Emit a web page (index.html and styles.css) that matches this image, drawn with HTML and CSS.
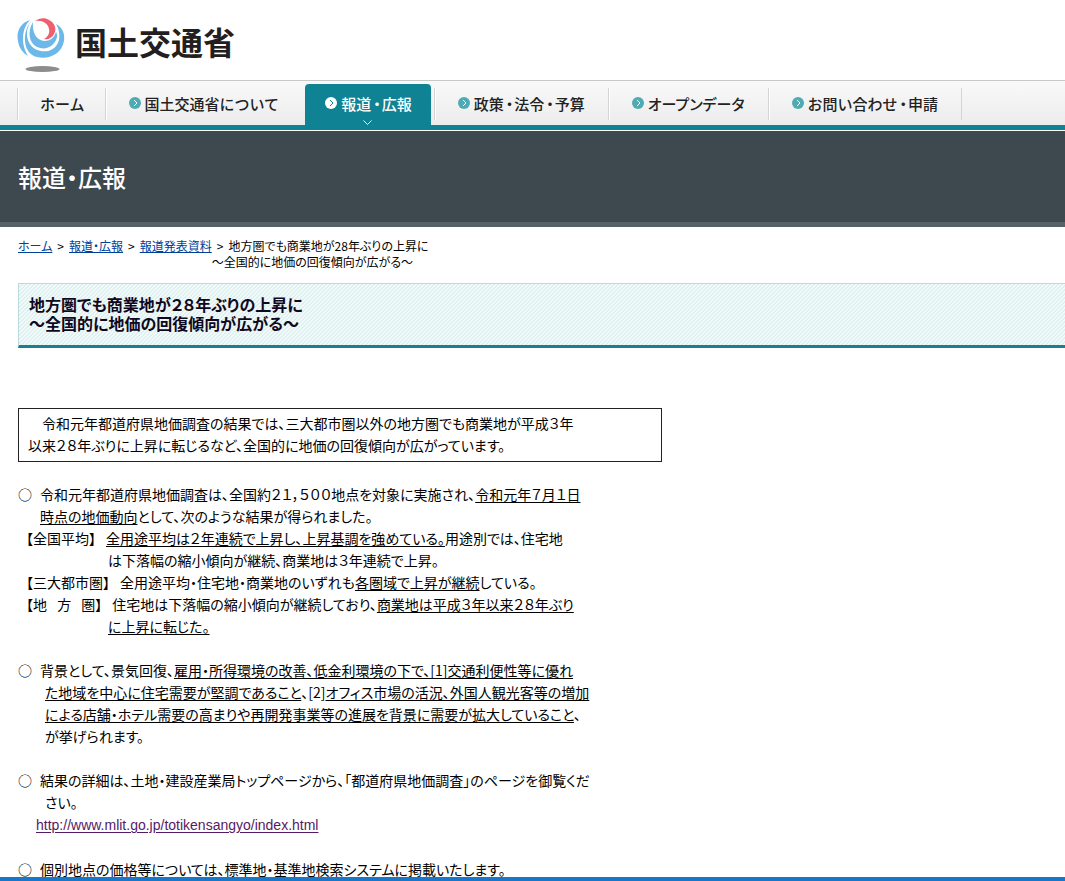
FILE: index.html
```
<!DOCTYPE html>
<html lang="ja">

  <head>

    <meta charset="UTF-8">

    <title>報道・広報 - 国土交通省</title>

    <link rel="stylesheet" href="styles.css">

  </head>

  <body>

    <div id="header">
      <a class="logo" href="#">
        <svg width="50" height="56" viewBox="0 0 50 56">
          <path fill="#6cb8e8" d="M13 2C3 5-1 14 1 23c1 7 5 12 10 15C4 28 4 11 13 2z"/>
          <path fill="#6cb8e8" d="M15 2C7 12 9 25 18 31c10 5 21 2 24-9 1-6 0-11-3-16 7 4 9 10 8 17-2 12-14 19-27 16C6 36 4 14 15 2z"/>
          <path fill="#6cb8e8" d="M16 4C10 14 12 25 20 29c9 4 18-1 20-10 0-2 0-4-1-5-2 6-6 9-12 9C19 22 15 14 16 4z"/>
          <path fill="#f05f6e" d="M18 3c4-3 10-4 14-1 6 3 8 9 5 14-2 4-6 6-10 5 4-2 6-6 5-10-1-6-7-9-14-8z"/>
          <ellipse cx="25.500" cy="51" rx="17" ry="3" fill="#8c8c8c"/>
        </svg>
        <span>国土交通省</span>
      </a>
    </div>

    <ul id="nav">
      <li class="home"><a href="#">ホーム</a></li>
      <li><a href="#"><svg class="arrow" viewBox="0 0 12 12"><circle cx="6" cy="6" r="6"/><path d="M5 3l3 3-3 3"/></svg>国土交通省について</a></li>
      <li class="active"><a href="#"><svg class="arrow" viewBox="0 0 12 12"><circle cx="6" cy="6" r="6"/><path d="M5 3l3 3-3 3"/></svg>報道<i>・</i>広報</a><svg class="down" viewBox="0 0 9 5"><path d="M.5.500l4 4 4-4"/></svg></li>
      <li><a href="#"><svg class="arrow" viewBox="0 0 12 12"><circle cx="6" cy="6" r="6"/><path d="M5 3l3 3-3 3"/></svg>政策<i>・</i>法令<i>・</i>予算</a></li>
      <li class="kana"><a href="#"><svg class="arrow" viewBox="0 0 12 12"><circle cx="6" cy="6" r="6"/><path d="M5 3l3 3-3 3"/></svg>オープンデータ</a></li>
      <li><a href="#"><svg class="arrow" viewBox="0 0 12 12"><circle cx="6" cy="6" r="6"/><path d="M5 3l3 3-3 3"/></svg>お問い合わせ<i>・</i>申請</a></li>
    </ul>

    <div id="title">報道・広報</div>

    <div id="main">
      <ul id="path">
        <li><a href="#">ホーム</a></li>
        <li><a href="#">報道・広報</a></li>
        <li><a href="#">報道発表資料</a></li>
        <li>地方圏でも商業地が28年ぶりの上昇に<br>～全国的に地価の回復傾向が広がる～</li>
      </ul>

      <h1>地方圏でも商業地が２８年ぶりの上昇に<br>～全国的に地価の回復傾向が広がる～</h1>

      <div id="text">
        <div class="box">
          　令和元年都道府県地価調査の結果では、三大都市圏以外の地方圏でも商業地が平成３年<br>
          以来２８年ぶりに上昇に転じるなど、全国的に地価の回復傾向が広がっています。
        </div>

        <div class="item">
          <p><span class="mark">○</span>令和元年都道府県地価調査は、全国約２１，５００地点を対象に実施され、<u>令和元年７月１日</u></p>
          <p class="in1"><u>時点の地価動向</u>として、次のような結果が得られました。</p>
          <p class="area"><span>【全国平均】</span><u>全用途平均は２年連続で上昇し、上昇基調を強めている。</u>用途別では、住宅地</p>
          <p class="in3">は下落幅の縮小傾向が継続、商業地は３年連続で上昇。</p>
          <p class="area"><span>【三大都市圏】</span>全用途平均・住宅地・商業地のいずれも<u>各圏域で上昇が継続</u>している。</p>
          <p class="area"><span>【地&ensp;&nbsp;方&ensp;&nbsp;圏】</span>住宅地は下落幅の縮小傾向が継続しており、<u>商業地は平成３年以来２８年ぶり</u></p>
          <p class="in3"><u>に上昇に転じた。</u></p>
        </div>

        <div class="item">
          <p><span class="mark">○</span>背景として、景気回復、<u>雇用・所得環境の改善、低金利環境の下で、[1]交通利便性等に優れ</u></p>
          <p class="in2"><u>た地域を中心に住宅需要が堅調であること</u>、[2]<u>オフィス市場の活況、外国人観光客等の増加</u></p>
          <p class="in2"><u>による店舗・ホテル需要の高まりや再開発事業等の進展を背景に需要が拡大していること</u>、</p>
          <p class="in2">が挙げられます。</p>
        </div>

        <div class="item">
          <p><span class="mark">○</span>結果の詳細は、土地・建設産業局トップページから、「都道府県地価調査」のページを御覧くだ</p>
          <p class="in2">さい。</p>
          <p class="url"><a href="http://www.mlit.go.jp/totikensangyo/index.html">http://www.mlit.go.jp/totikensangyo/index.html</a></p>
        </div>

        <div class="item">
          <p><span class="mark">○</span>個別地点の価格等については、標準地・基準地検索システムに掲載いたします。</p>
        </div>
      </div>
    </div>

    <div id="bar"></div>

  </body>

</html>
```

FILE: styles.css
```
body
{
  margin:0;
  background-color:white;
  color:black;
  font-family:"Noto Sans CJK JP","Liberation Sans",sans-serif
}
ul
{
  margin:0;
  padding:0;
  list-style:none
}
p
{
  margin:0
}
i
{
  padding:0 1px 0 2px;
  font-style:normal;
  font-feature-settings:"halt"
}
a
{
  color:#004098
}
#header
{
  padding:18px 17px 6px
}
.logo
{
  display:flex;
  gap:8px;
  width:max-content;
  height:56px;
  color:#231f20;
  font-size:32px;
  font-weight:700;
  line-height:47px;
  text-decoration:none
}
#nav
{
  display:flex;
  padding-left:17px;
  height:44px;
  border-top:1px solid #c8c8c8;
  border-bottom:5px solid #0f8294;
  background:linear-gradient(#f9f9f9,#ececec)
}
#nav li
{
  margin:7px 0 5px;
  border-left:1px solid #d4d4d4;
  box-shadow:inset 1px 0 white
}
#nav li:last-child
{
  border-right:1px solid #d4d4d4
}
#nav a
{
  display:flex;
  align-items:center;
  padding:0 23px;
  height:30px;
  color:#222;
  font-size:15px;
  font-weight:500;
  text-decoration:none;
  white-space:nowrap
}
#nav .home a
{
  padding:0 20px 0 22px
}
#nav .kana a
{
  font-feature-settings:"palt"
}
.arrow
{
  width:12px;
  height:12px;
  margin-right:4px;
  fill:#4fabb3
}
.arrow path
{
  fill:none;
  stroke:white
}
#nav .active
{
  margin:3px 3px 0;
  border:0;
  border-radius:4px 4px 0 0;
  box-shadow:none;
  background-color:#0f8294
}
#nav .active a
{
  padding:4px 19px 2px 20px;
  color:white
}
.active .arrow
{
  fill:white
}
.active .arrow path
{
  stroke:#0f8294
}
.down
{
  display:block;
  width:9px;
  height:5px;
  margin:0 auto;
  fill:none;
  stroke:white
}
#title
{
  margin-top:1px;
  padding-left:18px;
  border-bottom:5px solid #566168;
  background-color:#3d494f;
  color:white;
  font-size:24px;
  font-weight:500;
  line-height:91px;
  font-feature-settings:"halt"
}
#main
{
  padding-left:18px;
  font-feature-settings:"palt"
}
#path
{
  display:flex;
  padding:11px 0 13px;
  font-size:12px;
  line-height:16px
}
#path li + li:before
{
  content:">";
  padding:0 5px
}
h1
{
  margin:0;
  padding:11px 10px 12px;
  border:1px solid #b9d9de;
  border-right:0;
  border-bottom:3px solid #1a808f;
  background:linear-gradient(135deg,#f3fafa 25%,#dff0f0 25%,#dff0f0 50%,#f3fafa 50%,#f3fafa 75%,#dff0f0 75%) 0 0/4px 4px;
  color:#100820;
  font-size:16px;
  font-weight:700;
  line-height:19px
}
#text
{
  padding-top:60px;
  font-size:14px;
  line-height:22px
}
.box
{
  max-width:624px;
  margin-bottom:21px;
  padding:3px 9px 5px;
  border:1px solid #222
}
.item
{
  margin-bottom:22px
}
.item:last-child
{
  margin-bottom:0
}
.item p
{
  white-space:nowrap
}
u, .url a
{
  text-underline-offset:2px
}
.mark
{
  display:inline-block;
  width:22px
}
.in1
{
  padding-left:22px
}
.in2
{
  padding-left:27px
}
.in3
{
  padding-left:90px
}
.area
{
  padding-left:8px
}
.area span
{
  margin-right:10px
}
.url
{
  padding-left:18px
}
.url a
{
  color:#551a66;
  font-family:"Liberation Sans",sans-serif
}
#bar
{
  position:fixed;
  left:0;
  right:0;
  bottom:0;
  height:4px;
  background-color:#1a76c8
}
```
